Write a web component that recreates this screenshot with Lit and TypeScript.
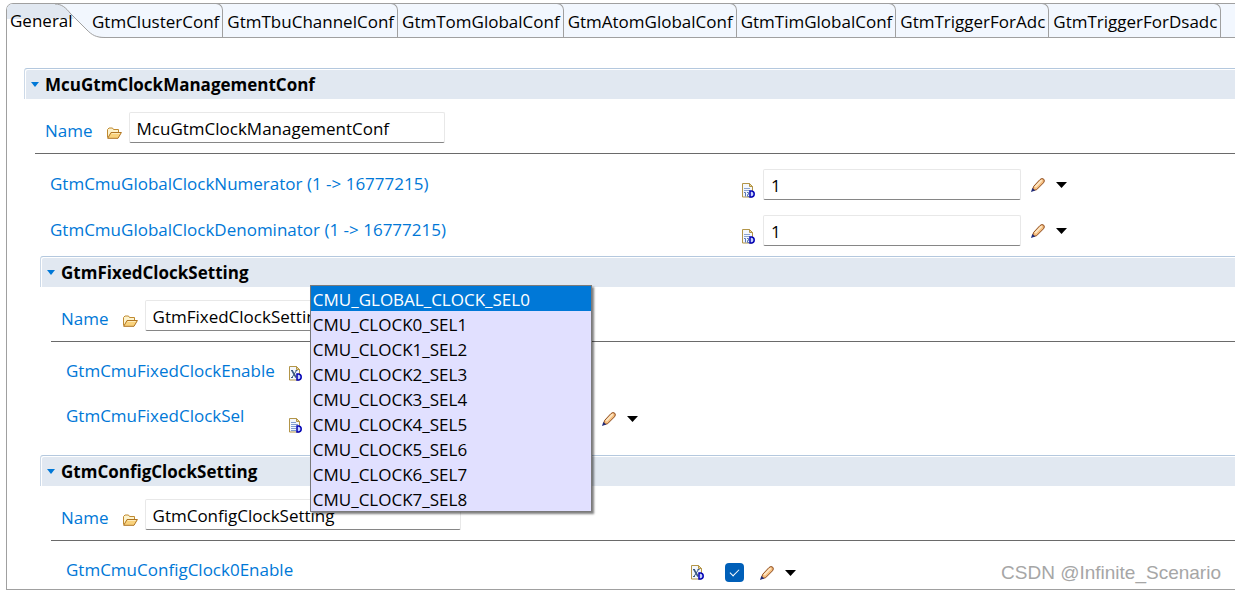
import { LitElement, html, css, svg } from "lit";
import { customElement, property, state } from "lit/decorators.js";

const TABS = [
  "General",
  "GtmClusterConf",
  "GtmTbuChannelConf",
  "GtmTomGlobalConf",
  "GtmAtomGlobalConf",
  "GtmTimGlobalConf",
  "GtmTriggerForAdc",
  "GtmTriggerForDsadc",
];

const CLOCK_SOURCES = [
  "CMU_GLOBAL_CLOCK_SEL0",
  "CMU_CLOCK0_SEL1",
  "CMU_CLOCK1_SEL2",
  "CMU_CLOCK2_SEL3",
  "CMU_CLOCK3_SEL4",
  "CMU_CLOCK4_SEL5",
  "CMU_CLOCK5_SEL6",
  "CMU_CLOCK6_SEL7",
  "CMU_CLOCK7_SEL8",
];

const folderIcon = html`<svg class="folder" width="15" height="12" viewBox="0 0 15 12" aria-hidden="true">
  <path d="M.5 10.5V2.5L2 1h3.5l1 1.5h5v2.500" fill="#fdf3cd" stroke="#c08a30" />
  <path d="M.7 11.300L4 5.500h10.400L11 11.300z" fill="#f9d27c" stroke="#b07522" stroke-linejoin="round" />
  <path d="M4.800 6.500h8" stroke="#fdeab8" fill="none" />
</svg>`;

const glyphs = {
  number: svg`<path d="M2 5.500h6M2 7.500h6" stroke="#8ba3cf" fill="none" />
    <path d="M2 9.500h1.500v4M5 9.500h1.500v2H5.500v2H7" stroke="#5a78b5" fill="none" />`,
  toggle: svg`<path d="M3 4.500l4 7" stroke="#3d5a80" stroke-width="1.600" fill="none" />
    <path d="M7.500 4.500l-4.500 7" stroke="#3d5a80" fill="none" />
    <path d="M2 4.500h2M6.500 4.500h2M2 11.500h2" stroke="#3d5a80" fill="none" />`,
  list: svg`<path d="M2 4.500h5M2 6.500h7M2 8.500h5M2 10.500h5M2 12.500h5" stroke="#7f9bd0" fill="none" />`,
};

const docIcon = (kind: keyof typeof glyphs) => html`<svg class="doc" width="13" height="15" viewBox="0 0 13 15" aria-hidden="true">
  <path d="M.5.500h7l3 3v10.500H.500z" fill="#f3f7fd" stroke="#b39548" />
  <path d="M7.500.500v3h3z" fill="#ecd797" stroke="#b39548" />
  ${glyphs[kind]}
  <path d="M8 8h1.800q2.400.300 2.400 3t-2.400 3h-1.800z" fill="#c9d3ff" stroke="#0000b4" stroke-width="1.500" />
</svg>`;

const pencilIcon = html`<svg width="14" height="14" viewBox="0 0 14 14" aria-hidden="true">
  <path d="M1.500 12.500L2.500 8.500 9 1.500Q11-.2 12.800 1.200 14 3 12.500 4.800L5.500 11.800z" fill="#f6bf80" stroke="#8c4a1c" />
  <path d="M4.200 9L10.800 2.200" stroke="#fde6c4" stroke-width="1.800" />
  <path d="M0 14L1.300 10l3 2.500z" fill="#1f2a78" />
</svg>`;

const arrowIcon = html`<svg width="11" height="6" viewBox="0 0 11 6" aria-hidden="true">
  <path d="M0 0h11L5.500 6z" fill="#000" />
</svg>`;

const shared = css`
  * {
    box-sizing: border-box;
  }
  svg {
    display: block;
    flex: none;
  }
  button {
    border: 0;
    padding: 0;
    margin: 0;
    background: none;
    font: inherit;
    color: inherit;
  }
  input[type="text"],
  select {
    height: 31px;
    min-width: 0;
    padding: 2px 7px 0;
    border: 1px solid #e8e8e8;
    border-bottom-color: #868686;
    border-radius: 2px;
    background: #fff;
    color: #000;
    font: inherit;
  }
`;

@customElement("conf-section")
class ConfSection extends LitElement {
  @property() heading = "";

  static styles = [
    shared,
    css`
      :host {
        display: block;
      }
      .head {
        display: flex;
        align-items: center;
        height: 31px;
        margin: 0;
        padding: 2px 0 0 6px;
        border-top: 1px solid #b4c8de;
        border-left: 1px solid #ccd9e8;
        border-top-left-radius: 3px;
        background: #e1e8f1;
        box-shadow: inset 1px 1px #fff;
        font-size: 17px;
        font-weight: 700;
      }
      .toggle {
        display: flex;
        align-items: center;
        gap: 6px;
      }
      .toggle svg {
        width: 8px;
        margin-bottom: 2px;
      }
      .name {
        display: flex;
        align-items: center;
        margin-left: 11px;
        padding: 13px 0 10px 10px;
        border-bottom: 1px solid #6a6a6a;
      }
      .name label {
        padding-top: 6px;
        color: #0078d7;
      }
      .folder {
        margin: 11px 7px 0 14px;
      }
      .name input {
        width: 316px;
      }
    `,
  ];

  render() {
    return html`
      <h2 class="head">
        <button class="toggle" aria-expanded="true">
          <svg width="8" height="5" viewBox="0 0 8 5" aria-hidden="true"><path d="M0 0h8L4 5z" fill="#0078d7" /></svg>
          ${this.heading}
        </button>
      </h2>
      <div class="name">
        <label for="name">Name</label>
        ${folderIcon}
        <input id="name" type="text" .value=${this.heading} />
      </div>
      <slot></slot>
    `;
  }
}

@customElement("app-root")
class AppRoot extends LitElement {
  @state() private selected = CLOCK_SOURCES[0];

  static styles = [
    shared,
    css`
      :host {
        display: block;
        padding: 3px 0 1px 6px;
        background: #fff;
        color: #000;
        font: 17px/24px "Open Sans", "Noto Sans", sans-serif;
        overflow-x: hidden;
      }
      .folder-pane {
        position: relative;
        border: 1px solid #a0a0a0;
        border-right: 0;
        border-top-left-radius: 7px;
      }
      .tabs {
        display: flex;
        height: 34px;
        border-bottom: 1px solid #a0a0a0;
        border-top-left-radius: 6px;
        background: #f2f7fe;
      }
      .tab {
        flex: none;
        height: 34px;
        margin-top: -1px;
        padding: 2px 3px 0 4px;
        border: 1px solid #a0a0a0;
        border-width: 1px 1px 0 0;
        border-top-right-radius: 7px;
        white-space: nowrap;
      }
      .tab.active {
        position: relative;
        width: 81px;
        margin: 0;
        padding: 0 0 0 3px;
        border: 0;
        text-align: left;
      }
      .tab.active span {
        position: relative;
      }
      .curve {
        position: absolute;
        left: 0;
        top: 0;
      }
      .page {
        padding: 30px 0 3px 17px;
      }
      .nested {
        margin-left: 16px;
      }
      .fields {
        display: grid;
        align-items: center;
        margin-left: 26px;
      }
      .fields label {
        padding-bottom: 2px;
        color: #0078d7;
        white-space: nowrap;
      }
      .ratio {
        grid-template-columns: minmax(0, 692fr) 21px 258px minmax(0, 214fr);
        row-gap: 15px;
        padding: 15px 0 10px;
      }
      .fixed {
        grid-template-columns: max-content 22px 281px minmax(0, 1fr);
        row-gap: 14px;
        grid-auto-rows: 31px;
        padding: 14px 0 23px;
      }
      .fixed label {
        margin-right: 14px;
      }
      .config {
        grid-template-columns: minmax(0, 625fr) 34px 19px minmax(0, 491fr);
        grid-auto-rows: 31px;
        padding-top: 14px;
      }
      .mid {
        margin-top: 4px;
      }
      .low {
        margin-top: 12px;
      }
      .lowest {
        margin-top: 18px;
      }
      .edit {
        display: flex;
        align-items: center;
        gap: 11px;
        padding-left: 10px;
      }
      .wide {
        padding-left: 16px;
      }
      .check-group {
        display: flex;
        align-items: center;
        padding-left: 14px;
      }
      .check {
        display: grid;
        place-items: center;
        flex: none;
        width: 19px;
        height: 19px;
        margin: 0;
        border-radius: 4px;
        background: #005fb8;
        appearance: none;
      }
      .check.mid {
        margin-top: 4px;
      }
      .check::after {
        content: "";
        width: 8px;
        height: 4px;
        margin-bottom: 2px;
        border: solid #fff;
        border-width: 0 0 1px 1px;
        transform: rotate(-45deg);
      }
      .combo {
        position: relative;
      }
      .combo select {
        width: 100%;
      }
      .popup {
        position: absolute;
        z-index: 2;
        left: -1px;
        bottom: -80px;
        width: 282px;
        margin: 0;
        padding: 0;
        border: 1px solid #7a7a7a;
        background: #e1e0ff;
        box-shadow: 2px 2px 2px rgba(0, 0, 0, 0.5);
        list-style: none;
      }
      .option {
        height: 25px;
        padding-left: 2px;
        line-height: 28px;
        white-space: nowrap;
      }
      .option.on {
        background: #0078d7;
        color: #fff;
      }
      .watermark {
        position: absolute;
        right: 14px;
        bottom: 4px;
        color: #a6a6a6;
        font: 19px/24px "Liberation Sans", Arial, sans-serif;
      }
    `,
  ];

  private editTools(name: string, extra = "") {
    return html`<div class="edit ${extra}">
      <button aria-label="Edit ${name}">${pencilIcon}</button>
      <button aria-label="More for ${name}">${arrowIcon}</button>
    </div>`;
  }

  private numberField(id: string) {
    return html`
      <label for=${id}>${id} (1 -> 16777215)</label>
      <span class="low">${docIcon("number")}</span>
      <input id=${id} type="text" value="1" />
      ${this.editTools(id)}
    `;
  }

  private tab(label: string, index: number) {
    if (index > 0) return html`<button class="tab" role="tab" aria-selected="false">${label}</button>`;
    return html`<button class="tab active" role="tab" aria-selected="true">
      <svg class="curve" width="98" height="34" viewBox="0 0 98 34" aria-hidden="true">
        <path d="M0 34V6Q0 0 6 0H48C55 0 59 4 63 9L67 15H0z" fill="#e1e8f1" />
        <path d="M0 15H68L80 26C85 31 89 33.500 97 33.500V34H0z" fill="#fff" />
        <path d="M48 0C55 0 59 4 63 9L80 26C85 31 89 33.500 98 33.500" fill="none" stroke="#a0a0a0" />
      </svg>
      <span>${label}</span>
    </button>`;
  }

  render() {
    return html`
      <main class="folder-pane">
        <div class="tabs" role="tablist">${TABS.map((t, i) => this.tab(t, i))}</div>
        <div class="page">
          <conf-section heading="McuGtmClockManagementConf">
            <div class="fields ratio">
              ${this.numberField("GtmCmuGlobalClockNumerator")}
              ${this.numberField("GtmCmuGlobalClockDenominator")}
            </div>
            <conf-section class="nested" heading="GtmFixedClockSetting">
              <div class="fields fixed">
                <label for="fixed-enable">GtmCmuFixedClockEnable</label>
                <span class="mid">${docIcon("toggle")}</span>
                <div class="check-group mid">
                  <input class="check" id="fixed-enable" type="checkbox" checked />
                  ${this.editTools("GtmCmuFixedClockEnable", "wide")}
                </div>
                <span></span>
                <label for="fixed-sel">GtmCmuFixedClockSel</label>
                <span class="lowest">${docIcon("list")}</span>
                <div class="combo">
                  <select id="fixed-sel">
                    ${CLOCK_SOURCES.map((c) => html`<option ?selected=${c === this.selected}>${c}</option>`)}
                  </select>
                  <ul class="popup" role="listbox" aria-label="GtmCmuFixedClockSel">
                    ${CLOCK_SOURCES.map(
                      (c) => html`<li
                        class="option ${c === this.selected ? "on" : ""}"
                        role="option"
                        aria-selected=${c === this.selected}
                        @click=${() => (this.selected = c)}
                      >${c}</li>`
                    )}
                  </ul>
                </div>
                ${this.editTools("GtmCmuFixedClockSel", "mid")}
              </div>
            </conf-section>
            <conf-section class="nested" heading="GtmConfigClockSetting">
              <div class="fields config">
                <label for="config-enable">GtmCmuConfigClock0Enable</label>
                <span class="mid">${docIcon("toggle")}</span>
                <input class="check mid" id="config-enable" type="checkbox" checked />
                ${this.editTools("GtmCmuConfigClock0Enable", "wide mid")}
              </div>
            </conf-section>
          </conf-section>
        </div>
        <div class="watermark">CSDN @Infinite_Scenario</div>
      </main>
    `;
  }
}
